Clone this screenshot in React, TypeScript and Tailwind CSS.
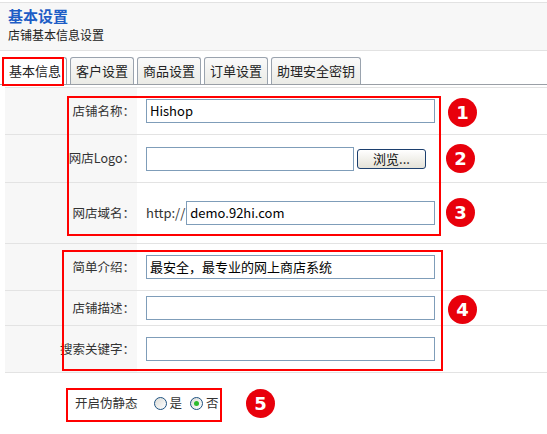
import type { ReactNode } from 'react';

const CJK = "font-['Noto_Sans_CJK_SC','Noto_Sans',sans-serif]";

const TABS = ['基本信息', '客户设置', '商品设置', '订单设置', '助理安全密钥'];

function Row({ label, h, children }: { label: ReactNode; h: string; children?: ReactNode }) {
  return (
    <div className={`flex border-b border-[#e3e3e3] ${h}`}>
      <div className="flex w-[132px] shrink-0 items-center justify-end bg-[#f7f7f7] pr-[2px] text-[12.5px] text-[#333]">
        {label}
      </div>
      <div className="flex flex-1 items-center pl-[9px]">{children}</div>
    </div>
  );
}

function TextBox({ w, value }: { w: string; value?: string }) {
  return (
    <div
      className={`flex h-[24px] items-center border border-[#7f9db9] bg-white px-[3px] text-[13px] text-black ${w}`}
    >
      {value}
    </div>
  );
}

function Badge({ n, className }: { n: number; className: string }) {
  return (
    <span
      className={`absolute flex h-[29px] w-[29px] items-center justify-center rounded-full bg-[#e8000b] font-['DejaVu_Sans',sans-serif] text-[18px] font-bold text-white ${className}`}
    >
      {n}
    </span>
  );
}

function Radio({ checked, label }: { checked?: boolean; label: string }) {
  return (
    <span className="flex items-center gap-[3px]">
      <span className="flex h-[13px] w-[13px] items-center justify-center rounded-full border border-[#1c5180] bg-gradient-to-br from-[#dcdcd7] to-white">
        {checked && <span className="h-[5px] w-[5px] rounded-full bg-[#2dbb2d]" />}
      </span>
      <span>{label}</span>
    </span>
  );
}

export default function App() {
  return (
    <div className={`relative h-[434px] w-[547px] overflow-hidden bg-white ${CJK}`}>
      {/* page header */}
      <div className="mt-[2px] h-[49px] border-y border-[#e2e2e2] bg-[#f7f7f7] px-[8px] pt-[4px]">
        <div className="text-[15px] font-bold leading-[18px] text-[#1d5dc6]">基本设置</div>
        <div className="mt-[3px] text-[12px] leading-[14px] text-[#222]">店铺基本信息设置</div>
      </div>

      {/* tabs */}
      <div className="mt-[6px] flex h-[28px] items-end gap-[3px] border-b border-[#9a9fa6] pl-[3px]">
        {TABS.map((t, i) => (
          <div
            key={t}
            className={`flex h-[27px] items-center rounded-t-[3px] border border-b-0 border-[#9aa3ae] px-[5px] text-[13px] text-[#222] ${
              i === 0 ? 'bg-white' : 'bg-gradient-to-b from-[#fafafa] to-[#ebebe6]'
            }`}
          >
            {t}
          </div>
        ))}
      </div>

      {/* form table */}
      <div className="ml-[5px] mt-[2px] border-t border-[#e3e3e3]">
        <Row label="店铺名称：" h="h-[47px]">
          <TextBox w="w-[289px]" value="Hishop" />
        </Row>
        <Row label="网店Logo：" h="h-[48px]">
          <TextBox w="w-[208px]" />
          <button className="ml-[3px] h-[20px] w-[69px] rounded-[3px] border border-[#1c3f6e] bg-gradient-to-b from-white to-[#e4e2d8] text-[13px] leading-none text-[#111]">
            浏览...
          </button>
        </Row>
        <Row label="网店域名：" h="h-[61px]">
          <span className="mr-[1px] text-[13px] text-[#333]">http://</span>
          <TextBox w="w-[249px]" value="demo.92hi.com" />
        </Row>
        <Row label="简单介绍：" h="h-[47px]">
          <TextBox w="w-[289px]" value="最安全，最专业的网上商店系统" />
        </Row>
        <Row label="店铺描述：" h="h-[35px]">
          <TextBox w="w-[289px]" />
        </Row>
        <Row label="搜索关键字：" h="h-[47px]">
          <TextBox w="w-[289px]" />
        </Row>
        <div className="flex h-[61px] items-center pl-[70px] text-[12.5px] text-[#333]">
          <span className="mr-[16px]">开启伪静态</span>
          <span className="flex gap-[8px]">
            <Radio label="是" />
            <Radio checked label="否" />
          </span>
        </div>
      </div>

      {/* callout boxes */}
      <div className="pointer-events-none absolute left-[2px] top-[57px] h-[29px] w-[62px] border-2 border-[#f00]" />
      <div className="pointer-events-none absolute left-[67px] top-[96px] h-[140px] w-[374px] border-2 border-[#f00]" />
      <div className="pointer-events-none absolute left-[62px] top-[250px] h-[121px] w-[381px] border-2 border-[#f00]" />
      <div className="pointer-events-none absolute left-[66px] top-[388px] h-[34px] w-[156px] border-2 border-[#f00]" />

      <Badge n={1} className="left-[448px] top-[98px]" />
      <Badge n={2} className="left-[446px] top-[144px]" />
      <Badge n={3} className="left-[446px] top-[198px]" />
      <Badge n={4} className="left-[448px] top-[295px]" />
      <Badge n={5} className="left-[246px] top-[389px]" />
    </div>
  );
}
